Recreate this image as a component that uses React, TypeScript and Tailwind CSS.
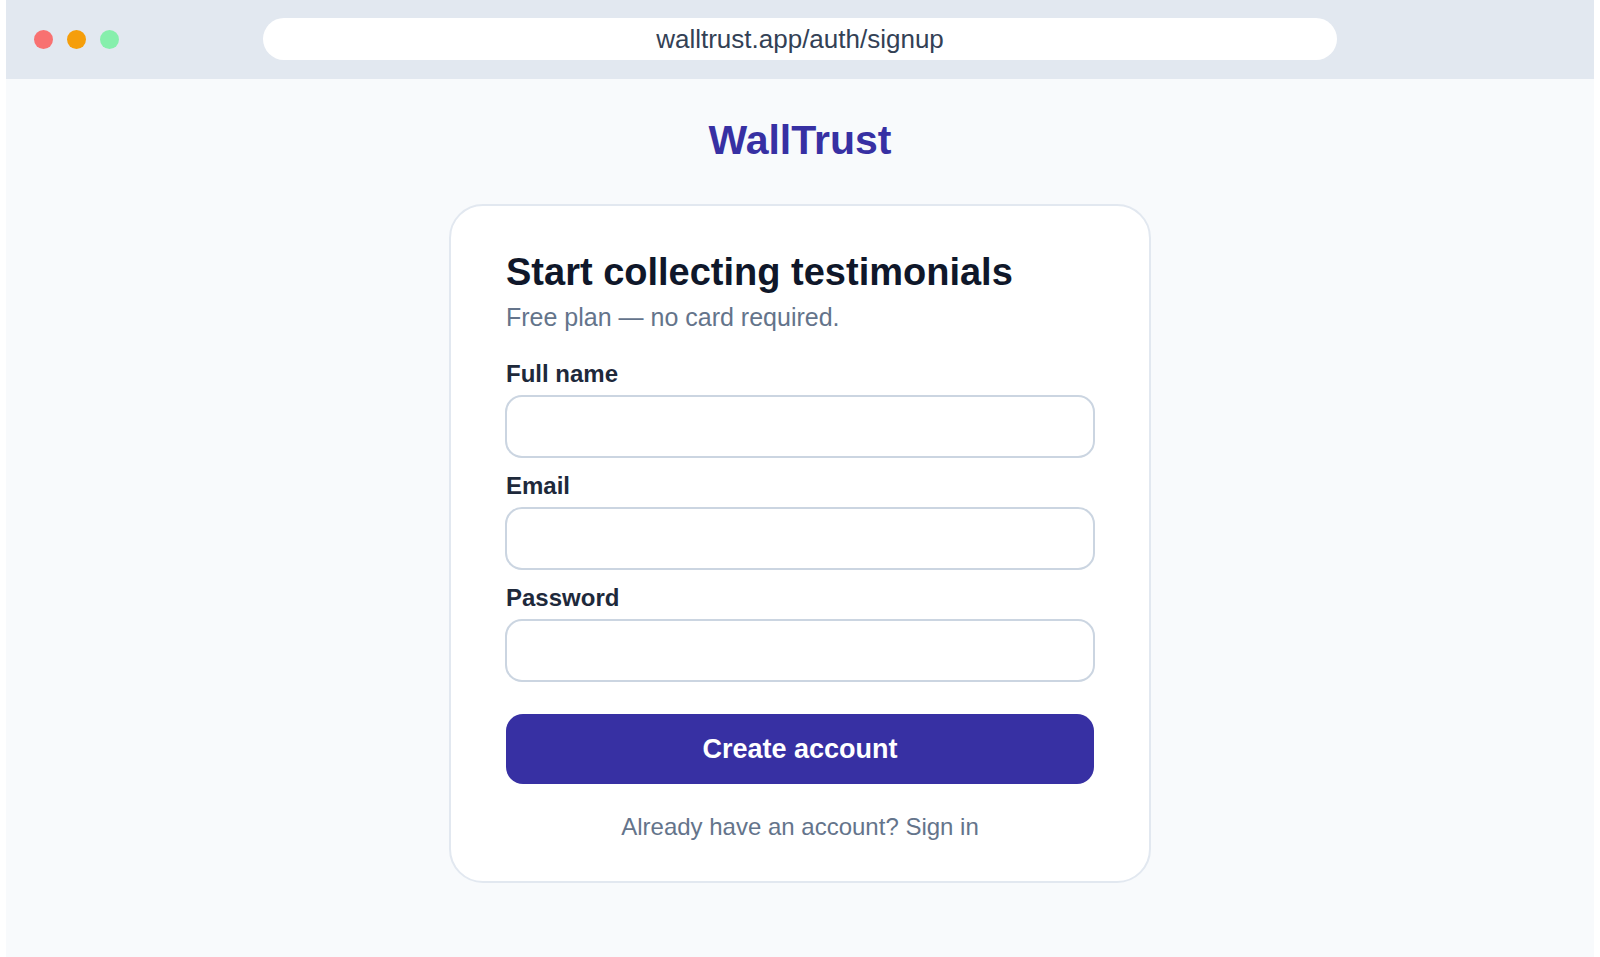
import { useState } from "react";

const fields = [
  { id: "name", label: "Full name", type: "text" },
  { id: "email", label: "Email", type: "email" },
  { id: "password", label: "Password", type: "password" },
];

const BrowserBar = () => (
  <header className="grid grid-cols-[257px_1fr_257px] items-center bg-slate-200 pt-[18px] pb-[19px]">
    <div className="flex gap-[14px] pl-7">
      <span className="size-[19px] rounded-full bg-[#f87171]" />
      <span className="size-[19px] rounded-full bg-[#f59e0b]" />
      <span className="size-[19px] rounded-full bg-[#86efac]" />
    </div>
    <div className="flex h-[42px] items-center justify-center rounded-full bg-white text-[26px] leading-8 text-[#334155]">
      walltrust.app/auth/signup
    </div>
  </header>
);

const SignupCard = () => {
  const [values, setValues] = useState<Record<string, string>>({});

  return (
    <form
      onSubmit={(e) => e.preventDefault()}
      className="mx-auto mt-10 w-full max-w-[702px] rounded-[34px] border-2 border-[#e2e8f0] bg-white px-[55px] pt-11 pb-[38px]"
    >
      <h1 className="text-[38px] leading-11 font-bold text-[#0f172a]">
        Start collecting testimonials
      </h1>
      <p className="mt-[7px] text-[25px] leading-8 text-[#64748b]">
        Free plan — no card required.
      </p>

      <div className="mt-[27px] flex flex-col gap-[15px]">
        {fields.map((field) => (
          <div key={field.id} className="flex flex-col gap-2">
            <label htmlFor={field.id} className="text-[24px] leading-7 font-bold text-[#1e293b]">
              {field.label}
            </label>
            <input
              id={field.id}
              type={field.type}
              value={values[field.id] ?? ""}
              onChange={(e) => setValues({ ...values, [field.id]: e.target.value })}
              className="h-[61px] w-full rounded-2xl bg-white px-5 text-[24px] text-[#1e293b] outline-2 -outline-offset-1 outline-[#cbd5e1]"
            />
          </div>
        ))}
      </div>

      <button
        type="submit"
        className="mt-[33px] h-[70px] w-full rounded-[17px] bg-[#3730a3] text-[27px] leading-8 font-bold text-white"
      >
        Create account
      </button>

      <p className="mt-[27px] text-center text-[24px] leading-8 text-[#64748b]">
        Already have an account? <a href="#signin">Sign in</a>
      </p>
    </form>
  );
};

export default function App() {
  return (
    <div className="min-h-screen bg-white px-1.5 font-['Liberation_Sans',Arial,sans-serif]">
      <div className="min-h-screen bg-[#f8fafc]">
        <BrowserBar />
        <main className="pt-[37px] pb-10">
          <div className="text-center text-[41px] leading-12 font-bold text-[#3730a3]">
            WallTrust
          </div>
          <SignupCard />
        </main>
      </div>
    </div>
  );
}
